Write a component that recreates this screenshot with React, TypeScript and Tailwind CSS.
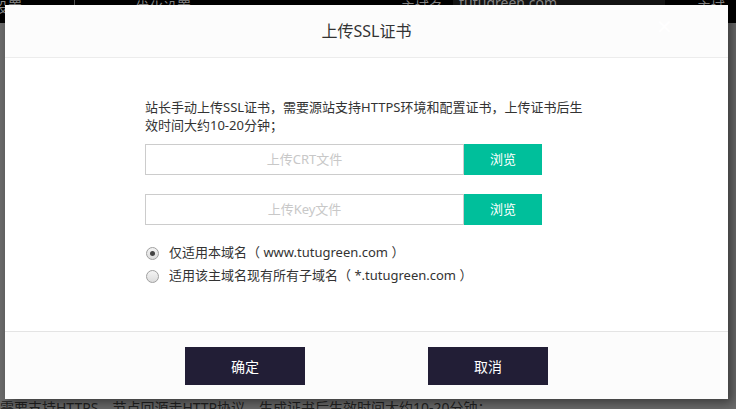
const FONT = 'font-["Microsoft_YaHei","Noto_Sans","Noto_Sans_CJK_SC",sans-serif]';

function FileRow({ label }: { label: string }) {
  return (
    <div className="flex h-[31px]">
      <div className="flex w-[319px] items-center justify-center border border-[#cccccc] bg-white text-[13px] text-[#c8c8c8]">
        {label}
      </div>
      <button className="w-[78px] bg-[#00bf9b] text-[13px] text-white">浏览</button>
    </div>
  );
}

function Radio({ checked, label }: { checked?: boolean; label: string }) {
  return (
    <label className="flex h-[18px] items-center gap-[10px] text-[13px] text-[#333]">
      <span className="flex h-[13px] w-[13px] items-center justify-center rounded-full border border-[#a0a0a0] bg-gradient-to-b from-[#f4f4f4] to-[#dcdcdc]">
        {checked && <span className="h-[5px] w-[5px] rounded-full bg-[#444]" />}
      </span>
      <span className="whitespace-pre">{label}</span>
    </label>
  );
}

export default function App() {
  return (
    <div className={`relative h-[409px] w-[736px] overflow-hidden bg-[#6b6b6b] ${FONT}`}>
      {/* page behind the overlay */}
      <div className="flex h-[23px] items-center bg-black text-[14px] text-[#888]">
        <span className="-mt-[10px] ml-[-6px]">设置</span>
        <span className="-mt-[10px] ml-[52px] h-[16px] w-px bg-[#555]" />
        <span className="-mt-[10px] ml-[60px]">优化设置</span>
        <span className="-mt-[10px] ml-[210px]">主域名</span>
        <span className="-mt-[6px] ml-[10px] flex h-[22px] w-[212px] items-start bg-[#151515] pl-[6px] leading-[10px]">tutugreen.com</span>
        <span className="-mt-[10px] ml-[32px]">主域</span>
      </div>
      <div className="absolute left-0 bottom-[-9px] whitespace-nowrap text-[14px] text-[#222]">
        需要支持HTTPS，节点回源走HTTP协议，生成证书后生效时间大约10-20分钟；
      </div>

      {/* dialog */}
      <div className="absolute left-[5px] top-[5px] flex h-[394px] w-[723px] flex-col bg-white shadow-[4px_4px_10px_rgba(0,0,0,0.45)]">
        <div className="relative flex h-[53px] items-center justify-center border-b border-[#ececec] bg-[#fcfcfc]">
          <span className="text-[16px] text-[#333]">上传SSL证书</span>
          <span className="absolute right-[55px] top-[12px] text-[20px] leading-none text-white">✕</span>
        </div>

        <div className="flex flex-1 flex-col pl-[140px] pt-[40px]">
          <p className="text-[13px] leading-[18px] text-[#333]">
            站长手动上传SSL证书，需要源站支持HTTPS环境和配置证书，上传证书后生
            <br />
            效时间大约10-20分钟；
          </p>
          <div className="mt-[10px] flex flex-col gap-[19px]">
            <FileRow label="上传CRT文件" />
            <FileRow label="上传Key文件" />
          </div>
          <div className="mt-[19px] flex flex-col gap-[5px] pl-[1px]">
            <Radio checked label="仅适用本域名（ www.tutugreen.com ）" />
            <Radio label="适用该主域名现有所有子域名（ *.tutugreen.com ）" />
          </div>
        </div>

        <div className="flex h-[68px] justify-center gap-[123px] border-t border-[#e4e4e4] bg-[#fcfcfc] pt-[15px]">
          <button className="h-[38px] w-[120px] bg-[#221e36] text-[14px] text-white">确定</button>
          <button className="h-[38px] w-[120px] bg-[#221e36] text-[14px] text-white">取消</button>
        </div>
      </div>
    </div>
  );
}
